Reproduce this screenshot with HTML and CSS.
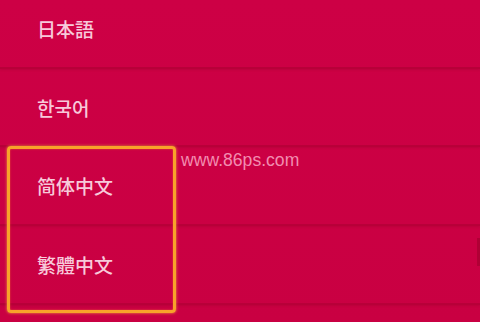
FILE: index.html
```html
<!DOCTYPE html>
<html lang="zh">
<head>
    <meta charset="UTF-8">
    <title>Language</title>
    <link rel="stylesheet" href="styles.css">
</head>
<body>
    <div class="screen">
        <ul class="lang-list">
            <li class="lang-item" lang="ja">日本語</li>
            <li class="lang-item" lang="ko">한국어</li>
            <li class="lang-item" lang="zh-CN">简体中文</li>
            <li class="lang-item" lang="zh-TW">繁體中文</li>
            <li class="lang-item"></li>
        </ul>
        <div class="highlight"></div>
        <div class="watermark">www.86ps.com</div>
        <div class="scroll-tick"></div>
    </div>
</body>
</html>
```

FILE: styles.css
```css
html, body {
    margin: 0;
    padding: 0;
    background: #cc0044;
}

.screen {
    position: relative;
    width: 480px;
    height: 322px;
    overflow: hidden;
    background: linear-gradient(180deg, #cd0045 0%, #c90042 100%);
    font-family: "Noto Sans CJK SC", "Noto Sans CJK KR", "Noto Sans", sans-serif;
}

.lang-list {
    list-style: none;
    margin: -10px 0 0 0;
    padding: 0;
}

.lang-item {
    height: 77px;
    display: flex;
    align-items: center;
    padding-left: 37px;
    font-size: 19px;
    font-weight: 500;
    color: #f7c9da;
    border-bottom: 2px solid #b80039;
    box-shadow: 0 1px 2px rgba(140, 0, 40, 0.25);
}

.lang-item:nth-child(2) {
    height: 76px;
}

.highlight {
    position: absolute;
    left: 7px;
    top: 146px;
    width: 163px;
    height: 161px;
    border: 3px solid #f8a22a;
    border-radius: 4px;
    box-shadow: 0 0 3px rgba(255, 200, 60, 0.8), inset 0 0 2px rgba(255, 140, 40, 0.6);
}

.watermark {
    position: absolute;
    left: 181px;
    top: 150px;
    font-family: "Liberation Sans", Arial, sans-serif;
    font-size: 17.6px;
    color: #f28cb0;
}

.scroll-tick {
    position: absolute;
    right: 0;
    top: 238px;
    width: 3px;
    height: 28px;
    background: rgba(150, 0, 40, 0.5);
}
```
